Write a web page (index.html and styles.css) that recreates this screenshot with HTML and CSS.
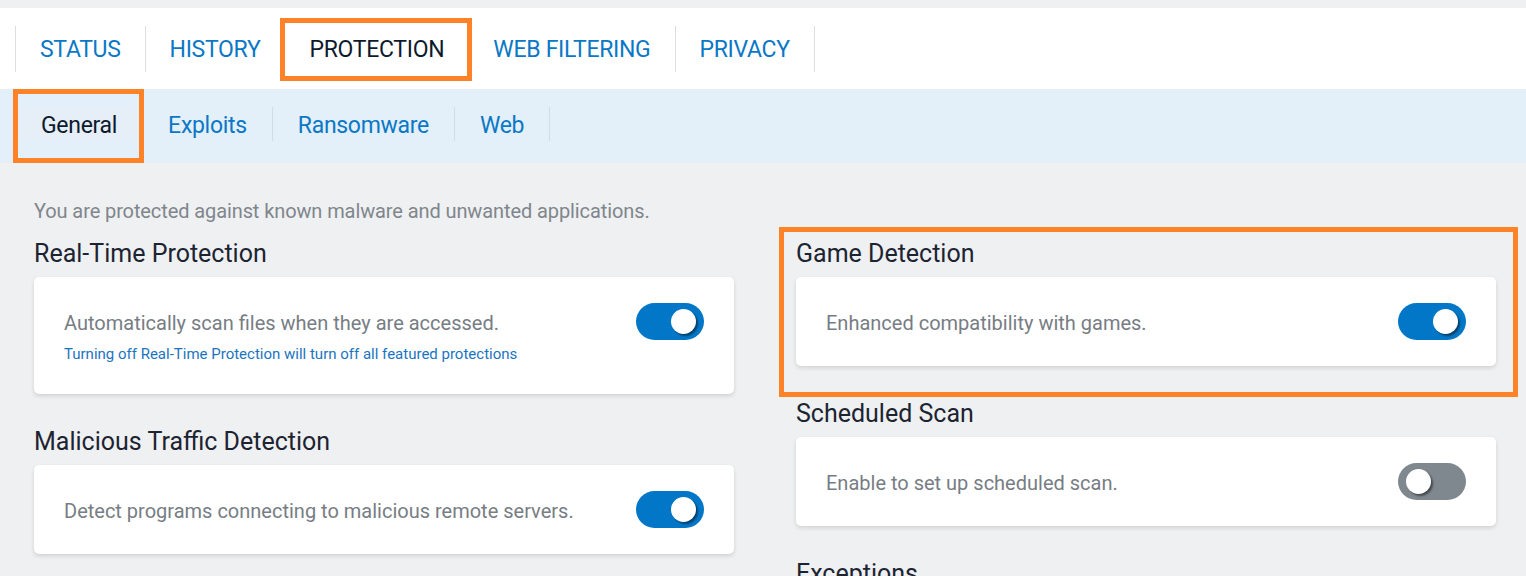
FILE: index.html
```html
<!DOCTYPE html>
<html lang="en">
<head>
<meta charset="UTF-8">
<title>Protection - General</title>
<link rel="stylesheet" href="styles.css">
</head>
<body>
<div class="header">
	<ul class="tabs">
		<li>STATUS</li>
		<li>HISTORY</li>
		<li class="active">PROTECTION</li>
		<li>WEB FILTERING</li>
		<li>PRIVACY</li>
	</ul>
</div>
<div class="subnav">
	<ul class="subtabs">
		<li class="active">General</li>
		<li>Exploits</li>
		<li>Ransomware</li>
		<li>Web</li>
	</ul>
</div>
<div class="content">
	<p class="intro">You are protected against known malware and unwanted applications.</p>
	<div class="columns">
		<div class="col">
			<div class="section">
				<h2>Real-Time Protection</h2>
				<div class="card note">
					<div class="row">
						<span class="desc">Automatically scan files when they are accessed.</span>
						<span class="switch on"><i></i></span>
					</div>
					<p class="hint">Turning off Real-Time Protection will turn off all featured protections</p>
				</div>
			</div>
			<div class="section">
				<h2>Malicious Traffic Detection</h2>
				<div class="card">
					<div class="row">
						<span class="desc">Detect programs connecting to malicious remote servers.</span>
						<span class="switch on"><i></i></span>
					</div>
				</div>
			</div>
		</div>
		<div class="col">
			<div class="section marked">
				<h2>Game Detection</h2>
				<div class="card">
					<div class="row">
						<span class="desc">Enhanced compatibility with games.</span>
						<span class="switch on"><i></i></span>
					</div>
				</div>
			</div>
			<div class="section">
				<h2>Scheduled Scan</h2>
				<div class="card">
					<div class="row">
						<span class="desc">Enable to set up scheduled scan.</span>
						<span class="switch"><i></i></span>
					</div>
				</div>
			</div>
			<div class="section">
				<h2>Exceptions</h2>
			</div>
		</div>
	</div>
</div>
</body>
</html>
```
FILE: styles.css
```css
html,body{
	margin:0;
	padding:0;
}
body{
	background:#eff0f2;
	font-family:Roboto,"Liberation Sans",sans-serif;
	overflow:hidden;
	height:576px;
}
ul{
	list-style:none;
	margin:0;
	padding:0;
}
.header{
	margin-top:8px;
	height:81px;
	background:#fff;
	padding-top:18px;
	box-sizing:border-box;
}
.tabs{
	display:flex;
	margin-left:15px;
	border-left:1px solid #dcdee1;
	height:46px;
	width:max-content;
}
.tabs li{
	position:relative;
	height:46px;
	line-height:48px;
	padding:0 24px;
	border-right:1px solid #dcdee1;
	font-size:23px;
	letter-spacing:-0.3px;
	color:#0a78c6;
}
.tabs li.active{
	color:#0d1a2e;
}
.tabs li.active:after,
.subtabs li.active:after,
.section.marked:after{
	content:"";
	position:absolute;
	border:5px solid #fe8227;
	pointer-events:none;
}
.tabs li.active:after{
	left:-5px;
	right:-4px;
	top:-8px;
	bottom:-9px;
}
.subnav{
	height:74px;
	background:#e3eff9;
	padding-top:18px;
	box-sizing:border-box;
}
.subtabs{
	display:flex;
	margin-left:16px;
}
.subtabs li{
	position:relative;
	height:34px;
	line-height:38px;
	padding:0 25px;
	border-right:1px solid #d3dce3;
	font-size:23px;
	letter-spacing:-0.3px;
	color:#0a78c6;
}
.subtabs li.active{
	color:#0d1a2e;
	background:#e6eef7;
}
.subtabs li.active:after{
	left:-3px;
	right:-2px;
	top:-18px;
	bottom:-22px;
}
.content{
	padding:36px 30px 0 34px;
}
.intro{
	margin:0 0 16px;
	font-size:20px;
	line-height:24px;
	letter-spacing:-0.1px;
	color:#7f868c;
}
.columns{
	display:grid;
	grid-template-columns:700px 700px;
	column-gap:62px;
}
.section{
	position:relative;
	margin-bottom:33px;
}
.section.marked:after{
	left:-17px;
	right:-22px;
	top:-12px;
	bottom:-31px;
}
h2{
	margin:0 0 8px;
	font-size:25px;
	line-height:30px;
	font-weight:normal;
	color:#1c2431;
}
.card{
	background:#fff;
	border-radius:5px;
	box-shadow:0 2px 4px rgba(0,0,0,0.13);
	padding:26px 30px;
}
.card.note{
	padding-bottom:30px;
}
.row{
	display:flex;
	align-items:center;
	justify-content:space-between;
	min-height:37px;
}
.desc{
	font-size:20px;
	padding-top:2px;
	color:#777d84;
}
.hint{
	margin:4px 0 0;
	font-size:15px;
	line-height:20px;
	color:#1b74bf;
}
.switch{
	position:relative;
	display:inline-block;
	width:68px;
	height:37px;
	border-radius:19px;
	background:#7f888f;
}
.switch.on{
	background:#0277c8;
}
.switch i{
	position:absolute;
	top:6px;
	left:8px;
	width:25px;
	height:25px;
	border-radius:50%;
	background:#fff;
	box-shadow:2px 2px 2px rgba(0,0,0,0.45);
}
.switch.on i{
	left:auto;
	right:8px;
}
```
